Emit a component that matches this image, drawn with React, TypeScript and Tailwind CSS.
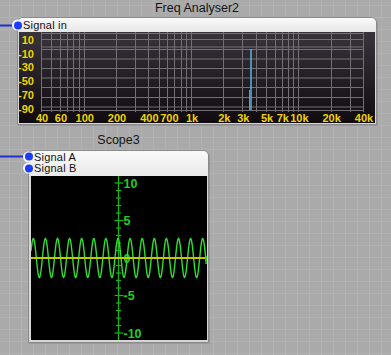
import React from "react";

const font = "font-['Liberation_Sans',Arial,sans-serif]";

// log grid for the analyser, 40 Hz .. 40 kHz over 322px
const fx = (f: number) => 22 + (322 * Math.log10(f / 40)) / 3;
const gridFreqs: number[] = [];
for (const d of [10, 100, 1000, 10000]) {
  for (let m = 1; m <= 9; m++) {
    const f = d * m;
    if (f >= 40 && f <= 40000) gridFreqs.push(f);
  }
}
gridFreqs.push(20000, 30000, 40000);
// [label, freq, nudge]
const xLabels: [string, number, number][] = [
  ["40", 40, 0], ["60", 60, 0], ["100", 100, 0], ["200", 200, 0], ["400", 400, 0], ["700", 700, -6], ["1k", 1000, 0],
  ["2k", 2000, 0], ["3k", 3000, 0], ["5k", 5000, 0], ["7k", 7000, 0], ["10k", 10000, 0], ["20k", 20000, 0], ["40k", 40000, 0],
];
const hLines = [1, 7, 14.5, 17, 26.5, 36, 45.5, 55, 65, 74.5, 78];
const yLabels: [string, number][] = [["10", 8], ["-10", 22], ["-30", 35], ["-50", 49], ["-70", 63], ["-90", 77]];

function Pin({ wire }: { wire: string }) {
  return (
    <span className="absolute -left-[6px] top-1/2 flex h-[11px] w-[11px] -translate-y-1/2 items-center justify-center rounded-full bg-[#f2f2f2]">
      {/* wire coming in from the left edge of the canvas */}
      <span className={`absolute right-full top-1/2 h-[2px] -translate-y-1/2 bg-[#1f2fd0] ${wire}`} />
      <span className="h-[8px] w-[8px] rounded-full bg-[#1a3cff]" />
    </span>
  );
}

function Analyser() {
  return (
    <svg width="356" height="91" className="block">
      <defs>
        <linearGradient id="dk" x1="0" y1="0" x2="0" y2="1">
          <stop offset="0" stopColor="#39343b" />
          <stop offset="1" stopColor="#0f0b0f" />
        </linearGradient>
      </defs>
      <rect width="356" height="91" fill="url(#dk)" />
      {hLines.map((y, i) => (
        <line key={i} x1="22" x2="344" y1={y + 0.5} y2={y + 0.5} stroke="#727072" strokeWidth="1" />
      ))}
      {gridFreqs.map((f, i) => (
        <line key={i} x1={Math.round(fx(f)) + 0.5} x2={Math.round(fx(f)) + 0.5} y1="0" y2="80" stroke="#727072" strokeWidth="1" />
      ))}
      <line x1="230.5" x2="230.5" y1="58" y2="78" stroke="#4f9fcf" strokeWidth="1" />
      <line x1="232" x2="232" y1="17" y2="78" stroke="#5ab4e4" strokeWidth="1.5" />
      {yLabels.map(([t, y]) => (
        <text key={t} x="15" y={y + 4} textAnchor="end" fill="#f0d400" fontSize="11" fontWeight="bold" fontFamily="Liberation Sans, Arial, sans-serif">
          {t}
        </text>
      ))}
      {xLabels.map(([t, f, n]) => (
        <text key={t} x={fx(f) + 1 + n} y="90" textAnchor="middle" fill="#f0d400" fontSize="11" fontWeight="bold" fontFamily="Liberation Sans, Arial, sans-serif">
          {t}
        </text>
      ))}
    </svg>
  );
}

function Scope() {
  const ax = 87.5;
  const zero = 82;
  const pts: string[] = [];
  for (let x = 0; x <= 175; x += 0.5) {
    const y = zero - 19.5 * Math.cos((2 * Math.PI * (x - 2.3)) / 12.1);
    pts.push(`${x},${y.toFixed(2)}`);
  }
  const ticks: number[] = [];
  for (let v = -10; v <= 10; v++) ticks.push(v);
  return (
    <svg width="176" height="164" className="block bg-black">
      <line x1={ax} x2={ax} y1="0" y2="164" stroke="#14b814" strokeWidth="1.2" />
      {ticks.map((v) => {
        const y = zero - v * 7.5;
        const major = v % 5 === 0;
        return (
          <line key={v} x1={major ? ax - 4 : ax - 2.5} x2={major ? ax + 5 : ax + 2.5} y1={y} y2={y} stroke="#14b814" strokeWidth="1.2" />
        );
      })}
      {[["10", 10], ["5", 5], ["0", 0], ["-5", -5], ["-10", -10]].map(([t, v]) => (
        <text key={t} x={ax + 5} y={zero - (v as number) * 7.5 + 4.5} fill="#1fd01f" fontSize="12.5" fontWeight="bold" fontFamily="Liberation Sans, Arial, sans-serif">
          {t}
        </text>
      ))}
      <polyline points={pts.join(" ")} fill="none" stroke="#2ee02e" strokeWidth="1.4" />
      <line x1="0" x2="174" y1={zero} y2={zero} stroke="#c8c800" strokeWidth="2" />
      <line x1="175" x2="175" y1={zero - 2} y2={zero + 6} stroke="#2ee02e" strokeWidth="1.4" />
    </svg>
  );
}

export default function App() {
  return (
    <div
      className={`relative h-[355px] w-[391px] overflow-hidden bg-[#aaaaaa] bg-[linear-gradient(to_right,#b2b2b2_1px,transparent_1px),linear-gradient(to_bottom,#b2b2b2_1px,transparent_1px)] bg-[size:12px_12px] bg-[position:9px_5px] ${font}`}
    >
      {/* Freq Analyser2 node */}
      <div className="absolute left-[17px] top-[1px] flex w-[360px] flex-col gap-[1px]">
        <p className="text-center text-[12.5px] leading-[15px] text-[#151515]">Freq Analyser2</p>
        <div className="flex h-[108px] flex-col rounded-t-[6px] border border-[#8a8a8a] bg-[#d6d6d6] px-[1px] pb-[1px] shadow-[1px_1px_0_#9a9a9a]">
          <div className="relative -mx-[1px] flex h-[14px] items-center rounded-t-[5px] bg-[linear-gradient(#fafafa,#e6e6e6)] pl-[5px] text-[11px] leading-none tracking-[0.2px] text-[#111]">
            <Pin wire="w-[12px]" />
            Signal in
          </div>
          <Analyser />
        </div>
      </div>

      {/* Scope3 node */}
      <div className="absolute left-[28px] top-[133px] flex w-[181px] flex-col gap-[2px]">
        <p className="text-center text-[12.5px] leading-[15px] text-[#151515]">Scope3</p>
        <div className="flex h-[193px] flex-col rounded-t-[6px] border border-[#8a8a8a] bg-[#d6d6d6] pb-[2px] pl-[2px] pr-[1px] shadow-[1px_1px_0_#9a9a9a]">
          <div className="-ml-[2px] -mr-[1px] flex h-[25px] flex-col rounded-t-[5px] bg-[linear-gradient(#fafafa,#e8e8e8)] text-[11px] leading-none tracking-[0.2px] text-[#111]">
            <div className="relative flex h-[11px] items-center pl-[5px] pt-[1px]">
              <Pin wire="w-[23px]" />
              Signal A
            </div>
            <div className="relative flex h-[12px] items-center pl-[5px]">
              <Pin wire="w-0" />
              Signal B
            </div>
          </div>
          <Scope />
        </div>
      </div>
    </div>
  );
}
